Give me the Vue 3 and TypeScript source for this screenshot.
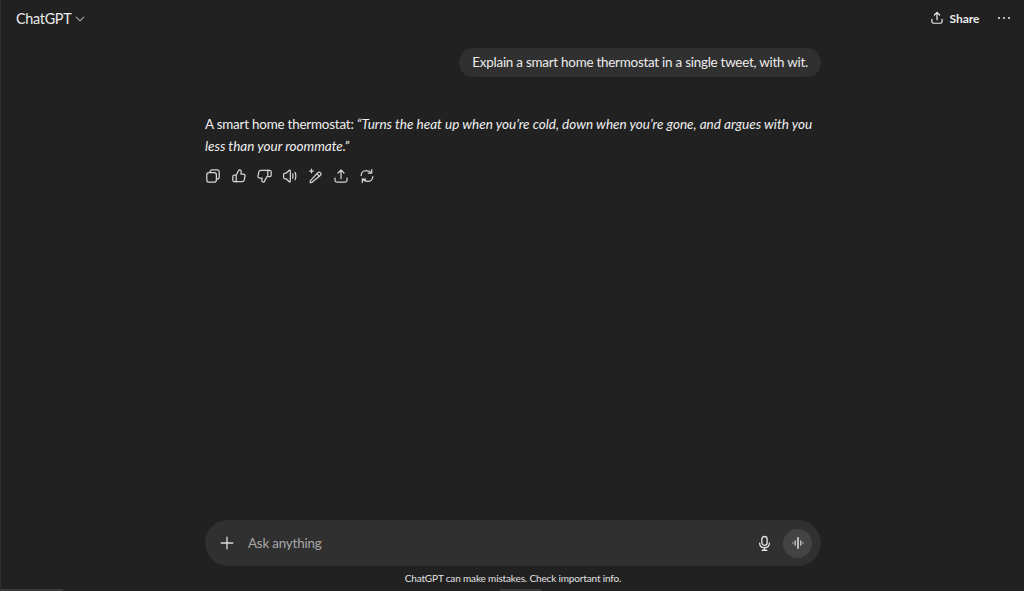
<script setup lang="ts">
const actions = ['copy', 'up', 'down', 'speak', 'edit', 'share', 'redo']
</script>

<template>
  <div class="page">
    <header class="top">
      <div class="brand">
        <span class="title">ChatGPT</span>
        <svg class="chev" width="10" height="10" viewBox="0 0 12 12" fill="none" stroke="#a8a8a8" stroke-width="1.4" stroke-linecap="round" stroke-linejoin="round"><path d="M1.500 3.800 6 8.300l4.500-4.500" /></svg>
      </div>
      <div class="top-right">
        <div class="share">
          <svg width="14" height="14" viewBox="0 0 16 16" fill="none" stroke="#ececec" stroke-width="1.4" stroke-linecap="round" stroke-linejoin="round"><path d="M8 10V1.800M5 4.600 8 1.600l3 3M2.200 9.500v2.600c0 1.100.8 1.900 1.900 1.900h7.800c1.100 0 1.900-.8 1.900-1.900V9.500" /></svg>
          <span>Share</span>
        </div>
        <div class="dots"><i></i><i></i><i></i></div>
      </div>
    </header>

    <main class="thread">
      <div class="column">
        <div class="user-row"><div class="bubble">Explain a smart home thermostat in a single tweet, with wit.</div></div>
        <p class="answer">A smart home thermostat: <em>“Turns the heat up when you’re cold, down when you’re gone, and argues with you less than your roommate.”</em></p>
        <div class="actions">
          <span v-for="a in actions" :key="a" class="action">
            <svg width="16" height="16" viewBox="0 0 16 16" fill="none" stroke="#d4d4d4" stroke-width="1.25" stroke-linecap="round" stroke-linejoin="round">
              <template v-if="a === 'copy'">
                <rect x="1.800" y="4.600" width="9.600" height="9.600" rx="2.200" />
                <path d="M5 4.400V3.900c0-1.200.9-2.100 2.100-2.100h5c1.200 0 2.100.9 2.100 2.100v5c0 1.200-.9 2.100-2.100 2.100h-.6" />
              </template>
              <template v-else-if="a === 'up'">
                <path d="M5.200 7.200 7.700 2.400c.2-.4.5-.6.9-.6 1 0 1.700.9 1.600 1.900l-.3 2.300h2.600c1 0 1.700.9 1.500 1.900l-.8 4.200c-.2.9-1 1.600-1.900 1.600H3.400c-.9 0-1.600-.7-1.600-1.600V8.800c0-.9.7-1.600 1.600-1.600h1.800v6.900" />
              </template>
              <template v-else-if="a === 'down'">
                <path d="M10.800 8.800 8.300 13.600c-.2.400-.5.600-.9.600-1 0-1.700-.9-1.600-1.900l.3-2.300H3.500c-1 0-1.700-.9-1.500-1.900l.8-4.200c.2-.9 1-1.600 1.900-1.600h8.900c.9 0 1.600.7 1.600 1.600v3.200c0 .9-.7 1.600-1.600 1.600h-1.800V1.900" />
              </template>
              <template v-else-if="a === 'speak'">
                <path d="M1.600 6.400v3.200c0 .7.5 1.200 1.200 1.200h1.400l3 3c.4.400 1.100.1 1.100-.4V2.600c0-.5-.7-.8-1.100-.4l-3 3H2.800c-.7 0-1.200.5-1.200 1.200Z" />
                <path d="M10.600 6c.5.600.5 3.400 0 4M13 4.300c1.100 1.700 1.100 5.700 0 7.400" />
              </template>
              <template v-else-if="a === 'edit'">
                <path d="M4 14.300l-1.800.3.300-2 7.300-7.900c.7-.8 1.900-.8 2.600-.1.800.7.800 1.900.1 2.600L4 14.300Z" />
                <path d="M9 5.900l2.500 2.400" />
                <path d="M3.500 1.200v3.600M1.700 3h3.600" />
              </template>
              <template v-else-if="a === 'share'">
                <path d="M8 10.500V2M5 5l3-3 3 3M2 10v2.200c0 1 .8 1.800 1.800 1.800h8.400c1 0 1.800-.8 1.800-1.800V10" />
              </template>
              <template v-else>
                <path d="M2.200 7.500C2.200 4.700 4.400 2.600 7.200 2.600c2 0 3.900.6 5.300 2.400M12.700 1.500V5H9.300" />
                <path d="M13.800 8.500c0 2.800-2.200 4.900-5 4.900-2 0-3.900-.6-5.300-2.400M3.300 14.500V11h3.400" />
              </template>
            </svg>
          </span>
        </div>
      </div>
    </main>

    <footer class="foot">
      <div class="composer">
        <svg class="plus" width="14" height="14" viewBox="0 0 14 14" stroke="#dcdcdc" stroke-width="1.3" stroke-linecap="round"><path d="M7 1.200v11.600M1.200 7h11.600" /></svg>
        <span class="placeholder">Ask anything</span>
        <svg class="mic" width="15" height="17" viewBox="0 0 16 18" fill="none" stroke="#e4e4e4" stroke-width="1.4" stroke-linecap="round" stroke-linejoin="round"><rect x="5.200" y="1.500" width="5.600" height="9.500" rx="2.800" /><path d="M2.800 8.500c0 3 2.200 5 5.200 5s5.200-2 5.200-5M8 13.500v2.500M5.500 16.200h5" /></svg>
        <div class="voice">
          <svg width="14" height="14" viewBox="0 0 14 14" stroke="#ececec" stroke-width="1.400" stroke-linecap="round"><path d="M7 1.800v10.400" /><path d="M4.200 5v4M9.800 5v4" stroke="#c8c8c8" /><path d="M1.800 6.400v1.200M12.200 6.400v1.200" stroke="#8a8a8a" /></svg>
        </div>
      </div>
      <div class="notice">ChatGPT can make mistakes. Check important info.</div>
    </footer>

    <div class="strip strip-a"></div>
    <div class="strip strip-b"></div>
  </div>
</template>

<style>
html, body { margin: 0; background: #212121; }
</style>

<style scoped>
.page {
  position: relative;
  width: 1024px;
  height: 591px;
  overflow: hidden;
  display: flex;
  flex-direction: column;
  box-sizing: border-box;
  background: #212121;
  color: #ececec;
  font-family: Lato, "Open Sans", sans-serif;
  font-size: 13.4px;
  letter-spacing: -0.2px;
  border-left: 1px solid #2e2e2e;
}
.top {
  height: 36px;
  flex: none;
  display: flex;
  align-items: center;
  justify-content: space-between;
  padding: 0 14px 0 15px;
}
.brand { display: flex; align-items: center; gap: 4px; }
.title { font-size: 14.400px; letter-spacing: -0.3px; }
.chev { margin-top: 1px; }
.top-right { display: flex; align-items: center; gap: 18px; }
.share { display: flex; align-items: center; gap: 5px; font-size: 12px; font-weight: 700; letter-spacing: 0; }
.dots { display: flex; gap: 2.500px; }
.dots i { width: 2.500px; height: 2.500px; border-radius: 50%; background: #ececec; }
.thread { flex: 1; display: flex; justify-content: center; min-height: 0; }
.column { width: 616px; margin-left: 1px; }
.user-row { display: flex; justify-content: flex-end; margin-top: 12px; }
.bubble {
  height: 29px;
  line-height: 29px;
  padding: 0 13px;
  border-radius: 15px;
  background: #303030;
  white-space: nowrap;
  letter-spacing: -0.235px;
}
.answer {
  margin: 36px 0 0;
  line-height: 22px;
  color: #f0f0f0;
}
.answer em { font-style: italic; font-size: 13.500px; letter-spacing: 0; }
.actions { display: flex; gap: 9.700px; margin-top: 11px; }
.action { width: 16px; height: 16px; display: block; }
.action svg { display: block; }
.foot { flex: none; display: flex; flex-direction: column; align-items: center; }
.composer {
  width: 616px;
  margin-left: 1px;
  height: 46px;
  box-sizing: border-box;
  border-radius: 23px;
  background: #303030;
  display: flex;
  align-items: center;
  padding: 0 9px 0 15px;
}
.plus { flex: none; }
.placeholder { margin-left: 14px; flex: 1; color: #a8a8a8; }
.mic { flex: none; margin-right: 11px; }
.voice {
  width: 29px;
  height: 29px;
  border-radius: 50%;
  background: #434343;
  display: flex;
  align-items: center;
  justify-content: center;
}
.notice {
  margin-left: 1px;
  height: 25px;
  line-height: 25px;
  font-size: 10px;
  letter-spacing: -0.15px;
  color: #e2e2e2;
}
.strip { position: absolute; bottom: 0; height: 2px; background: #3a3a3a; }
.strip-a { left: 0; width: 62px; }
.strip-b { left: 499px; width: 41px; }
</style>
